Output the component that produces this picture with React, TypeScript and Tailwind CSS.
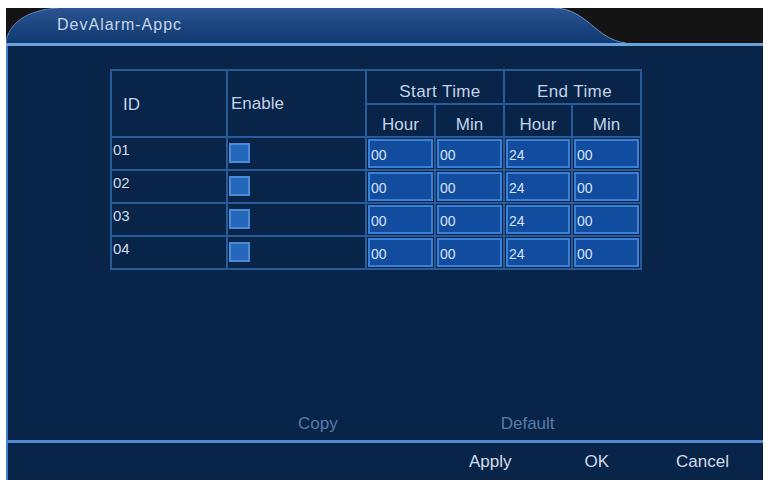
import React from 'react'

const font = { fontFamily: '"Liberation Sans", Arial, sans-serif' }

const rows = [
  { id: '01', sh: '00', sm: '00', eh: '24', em: '00' },
  { id: '02', sh: '00', sm: '00', eh: '24', em: '00' },
  { id: '03', sh: '00', sm: '00', eh: '24', em: '00' },
  { id: '04', sh: '00', sm: '00', eh: '24', em: '00' },
]

function TimeBox({ value }: { value: string }) {
  return (
    <div className="bg-[#082449] p-[1px] h-full">
      <div className="h-full border-2 border-[#3a80d6] bg-[#124c9f] text-[14px] leading-none text-[#d8e4f4] pl-[1px] pt-[7px]">
        {value}
      </div>
    </div>
  )
}

function TitleTab() {
  return (
    <svg className="absolute inset-0" width="757" height="35" viewBox="0 0 757 35">
      <defs>
        <linearGradient id="tab" x1="0" y1="0" x2="0" y2="1">
          <stop offset="0" stopColor="#2a5592" />
          <stop offset="0.5" stopColor="#1c4580" />
          <stop offset="1" stopColor="#123a72" />
        </linearGradient>
      </defs>
      <path
        d="M0 35 C2 16 20 2 52 0 L548 0 C580 0 590 32 620 35 Z"
        fill="url(#tab)"
      />
      <path d="M0 35 C2 16 20 2 52 0" fill="none" stroke="#5a86bf" strokeWidth="1" />
      <path d="M548 0 C580 0 590 32 620 35" fill="none" stroke="#6a92c6" strokeWidth="1" />
    </svg>
  )
}

const head = 'bg-[#082449] text-[17px] leading-none text-[#c5d3e6]'

export default function App() {
  return (
    <div className="w-[768px] h-[484px] bg-white pt-[8px] pl-[6px]" style={font}>
      <div className="w-[757px] h-[472px] flex flex-col">
        <div className="relative h-[35px] bg-[#141414] shrink-0">
          <TitleTab />
          <div className="relative pl-[51px] pt-[9px] text-[16px] leading-none tracking-[1px] text-[#c9d6e8]">
            DevAlarm-Appc
          </div>
        </div>
        <div className="h-[3px] bg-[#6aa2de] shrink-0" />
        <div className="flex-1 flex flex-col bg-[#082449] border-l-2 border-[#3f7fd0]">
          <div className="pl-[102px] pt-[23px]">
            <div className="grid grid-cols-[114px_137px_67px_67px_66px_67px] grid-rows-[32px_31px_31px_31px_31px_31px] gap-[2px] p-[2px] bg-[#285b9a] w-fit">
              <div className={`row-span-2 flex items-center pl-[11px] pt-[2px] ${head}`}>ID</div>
              <div className={`row-span-2 flex items-center pl-[3px] ${head}`}>Enable</div>
              <div className={`col-span-2 flex items-center justify-center pl-[10px] pt-[9px] tracking-[0.4px] ${head}`}>Start Time</div>
              <div className={`col-span-2 flex items-center justify-center pl-[4px] pt-[9px] tracking-[0.4px] ${head}`}>End Time</div>
              <div className={`flex items-center justify-center pt-[8px] ${head}`}>Hour</div>
              <div className={`flex items-center justify-center pt-[8px] ${head}`}>Min</div>
              <div className={`flex items-center justify-center pt-[8px] ${head}`}>Hour</div>
              <div className={`flex items-center justify-center pt-[8px] ${head}`}>Min</div>
              {rows.map((r) => (
                <React.Fragment key={r.id}>
                  <div className="bg-[#082449] pl-[1px] pt-[4px] text-[15px] leading-none text-[#d0dcec]">{r.id}</div>
                  <div className="bg-[#082449] pl-[1px] pt-[5px]">
                    <div className="w-[21px] h-[20px] bg-[#2467bb] border-2 border-[#4a8ad6]" />
                  </div>
                  <TimeBox value={r.sh} />
                  <TimeBox value={r.sm} />
                  <TimeBox value={r.eh} />
                  <TimeBox value={r.em} />
                </React.Fragment>
              ))}
            </div>
          </div>
          <div className="flex-1" />
          <div className="h-[25px] flex items-start text-[17px] leading-none text-[#5a7aa4]">
            <span className="ml-[290px]">Copy</span>
            <span className="ml-[163px]">Default</span>
          </div>
        </div>
        <div className="h-[3px] bg-[#4f8ad0] shrink-0" />
        <div className="h-[37px] shrink-0 bg-[#082449] border-l-2 border-[#3f7fd0] flex items-center text-[17px] text-[#d2dcea]">
          <span className="ml-[461px]">Apply</span>
          <span className="ml-[73px]">OK</span>
          <span className="ml-[67px]">Cancel</span>
        </div>
      </div>
    </div>
  )
}
